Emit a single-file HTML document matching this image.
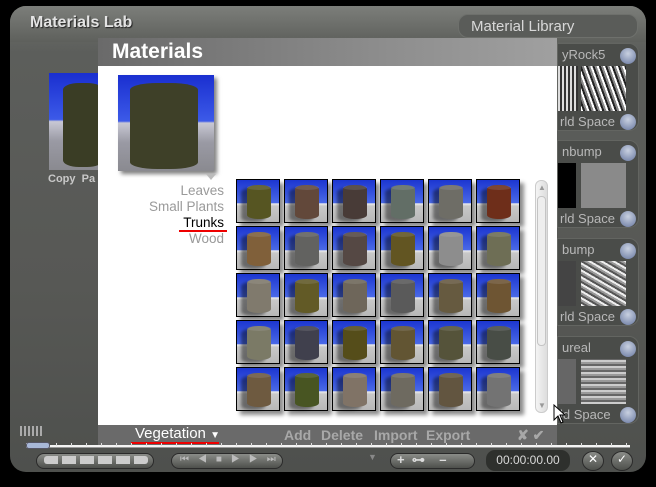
<!DOCTYPE html>
<html><head><meta charset="utf-8"><style>
*{margin:0;padding:0;box-sizing:border-box}
body{width:656px;height:487px;background:#000;position:relative;overflow:hidden;font-family:"Liberation Sans",sans-serif}
.abs{position:absolute}
#frame{left:10px;top:6px;width:636px;height:466px;border-radius:16px;background:linear-gradient(180deg,#6e706c 0%,#5c5e5b 10%,#575855 60%,#4e504d 100%)}
#titlebar{left:10px;top:6px;width:636px;height:36px;border-radius:16px 16px 0 0;background:linear-gradient(180deg,#7c7e7a,#5e605c)}
.t1{left:30px;top:14px;color:#e4e4e4;font-weight:bold;font-size:16px;text-shadow:1px 1px 1px #222}
#lib{left:458px;top:14px;width:180px;height:24px;border-radius:10px;background:#5a5c59;border:1px solid #6e706c;color:#d8d8d8;font-size:15px;padding:3px 0 0 12px}
.prev{background:linear-gradient(180deg,#1a2fd0 0%,#3c5ae8 48%,#c8c8d4 50%,#9a9aa4 70%,#8a8a90 100%)}
.cyl{position:absolute;border-radius:40%/8%}
#dlg{left:98px;top:38px;width:459px;height:407px;background:#fff}
#dhead{left:98px;top:38px;width:459px;height:28px;background:linear-gradient(90deg,#6a6a6a,#8c8c8c 60%,#a0a0a0)}
#dhead span{position:absolute;left:14px;top:2px;color:#fff;font-weight:bold;font-size:21px}
#dfoot{left:98px;top:425px;width:459px;height:20px;background:#6a6a6a}
.ft{color:#a8a8a8;font-weight:bold;font-size:14px;top:427px}
.cat{right:432px;font-size:13.5px;color:#9a9a9a;text-align:right}
.tile{position:absolute;width:44px;height:44px;border:1px solid #000;background:linear-gradient(180deg,#1c36d0 0%,#4a6ae8 55%,#f0f0f0 56%,#c8c8c8 62%,#b8b8b8 100%);box-shadow:4px 4px 4px rgba(0,0,0,.45)}
.tile i{position:absolute;left:10px;top:5px;width:24px;height:34px;border-radius:45%/12%;box-shadow:-6px 3px 3px rgba(0,0,0,.45);filter:brightness(.8)}
.tile i:after{content:"";position:absolute;left:0;top:0;right:0;height:5px;border-radius:50%;background:rgba(255,255,255,.15)}
.rp{left:557px;width:82px;height:88px;border-radius:0 10px 10px 0;background:#4a4c49;border:1px solid #636561}
.rp b{position:absolute;font-weight:normal;color:#b8b8b8;font-size:13px}
.knob{position:absolute;width:16px;height:16px;border-radius:50%;background:radial-gradient(circle at 50% 35%,#c8d0e0,#6878a0);left:62px}
.sw{position:absolute;left:23px;top:22px;width:45px;height:45px}
.btn{border-radius:9px;background:linear-gradient(180deg,#8a8c88,#4e504c);height:16px;top:453px;border:1px solid #2a2a2a}
</style></head><body>
<div id="frame" class="abs"></div>
<div id="titlebar" class="abs"></div>
<div class="abs t1">Materials Lab</div>
<div id="lib" class="abs">Material Library</div>

<div class="abs prev" style="left:49px;top:73px;width:52px;height:97px"><div class="cyl" style="left:14px;top:10px;width:40px;height:84px;background:#3a3d25"></div></div>
<div class="abs" style="left:48px;top:173px;color:#c8c8c8;font-size:11px;font-weight:bold">Copy&nbsp; Pa</div>
<div class="abs" style="left:20px;top:426px;width:22px;height:10px;background:repeating-linear-gradient(90deg,#aaa 0 2px,transparent 2px 4px)"></div>

<div class="abs rp" style="top:43px"><b style="left:4px;top:3px">yRock5</b><div class="knob" style="top:4px"></div><div class="sw" style="background:repeating-linear-gradient(70deg,#fff 0 2px,#222 2px 4px,#888 4px 6px)"></div><div class="abs" style="left:0;top:22px;width:20px;height:45px;background:repeating-linear-gradient(90deg,#ddd 0 2px,#333 2px 4px)"></div><b style="left:2px;top:70px">rld Space</b><div class="knob" style="top:70px"></div></div>
<div class="abs rp" style="top:140px"><b style="left:4px;top:3px">nbump</b><div class="knob" style="top:4px"></div><div class="sw" style="background:#8a8a8a"></div><div class="abs" style="left:0;top:22px;width:18px;height:45px;background:#000"></div><b style="left:2px;top:70px">rld Space</b><div class="knob" style="top:70px"></div></div>
<div class="abs rp" style="top:238px"><b style="left:4px;top:3px">bump</b><div class="knob" style="top:4px"></div><div class="sw" style="background:repeating-linear-gradient(30deg,#eee 0 2px,#555 2px 4px,#999 4px 6px)"></div><div class="abs" style="left:0;top:22px;width:18px;height:45px;background:#444"></div><b style="left:2px;top:70px">rld Space</b><div class="knob" style="top:70px"></div></div>
<div class="abs rp" style="top:336px"><b style="left:4px;top:3px">ureal</b><div class="knob" style="top:4px"></div><div class="sw" style="background:repeating-linear-gradient(0deg,#ccc 0 2px,#666 2px 4px,#999 4px 6px)"></div><div class="abs" style="left:0;top:22px;width:18px;height:45px;background:#666"></div><b style="left:2px;top:70px">ld Space</b><div class="knob" style="top:70px"></div></div>

<div id="dlg" class="abs"></div>
<div id="dhead" class="abs"><span>Materials</span></div>
<div class="abs prev" style="left:118px;top:75px;width:96px;height:96px;box-shadow:3px 3px 4px rgba(0,0,0,.5)"><div class="cyl" style="left:12px;top:8px;width:68px;height:86px;background:#3e4028"></div></div>
<div class="abs" style="left:206px;top:174px;width:0;height:0;border-left:5px solid transparent;border-right:5px solid transparent;border-top:6px solid #bbb"></div>
<div class="abs cat" style="top:183px">Leaves</div>
<div class="abs cat" style="top:199px">Small Plants</div>
<div class="abs cat" style="top:215px;color:#000">Trunks</div>
<div class="abs" style="left:179px;top:230px;width:48px;height:2px;background:#e00"></div>
<div class="abs cat" style="top:231px">Wood</div>

<div class="tile" style="left:236px;top:179px"><i style="background:#6b6a2a"></i></div>
<div class="tile" style="left:284px;top:179px"><i style="background:#7a5a48"></i></div>
<div class="tile" style="left:332px;top:179px"><i style="background:#5a4a45"></i></div>
<div class="tile" style="left:380px;top:179px"><i style="background:#7a8a80"></i></div>
<div class="tile" style="left:428px;top:179px"><i style="background:#8a8880"></i></div>
<div class="tile" style="left:476px;top:179px"><i style="background:#8a3a20"></i></div>
<div class="tile" style="left:236px;top:226px"><i style="background:#a07848"></i></div>
<div class="tile" style="left:284px;top:226px"><i style="background:#7a7a78"></i></div>
<div class="tile" style="left:332px;top:226px"><i style="background:#6a5a55"></i></div>
<div class="tile" style="left:380px;top:226px"><i style="background:#7a6a2a"></i></div>
<div class="tile" style="left:428px;top:226px"><i style="background:#b0b0b0"></i></div>
<div class="tile" style="left:476px;top:226px"><i style="background:#8a8a6a"></i></div>
<div class="tile" style="left:236px;top:273px"><i style="background:#a09888"></i></div>
<div class="tile" style="left:284px;top:273px"><i style="background:#7a7030"></i></div>
<div class="tile" style="left:332px;top:273px"><i style="background:#8a8070"></i></div>
<div class="tile" style="left:380px;top:273px"><i style="background:#707070"></i></div>
<div class="tile" style="left:428px;top:273px"><i style="background:#807050"></i></div>
<div class="tile" style="left:476px;top:273px"><i style="background:#8a6a40"></i></div>
<div class="tile" style="left:236px;top:320px"><i style="background:#9a9880"></i></div>
<div class="tile" style="left:284px;top:320px"><i style="background:#505060"></i></div>
<div class="tile" style="left:332px;top:320px"><i style="background:#6a6020"></i></div>
<div class="tile" style="left:380px;top:320px"><i style="background:#7a6a40"></i></div>
<div class="tile" style="left:428px;top:320px"><i style="background:#6a6848"></i></div>
<div class="tile" style="left:476px;top:320px"><i style="background:#5a6058"></i></div>
<div class="tile" style="left:236px;top:367px"><i style="background:#8a7050"></i></div>
<div class="tile" style="left:284px;top:367px"><i style="background:#5a6a2a"></i></div>
<div class="tile" style="left:332px;top:367px"><i style="background:#a09080"></i></div>
<div class="tile" style="left:380px;top:367px"><i style="background:#8a8478"></i></div>
<div class="tile" style="left:428px;top:367px"><i style="background:#7a6a50"></i></div>
<div class="tile" style="left:476px;top:367px"><i style="background:#909090"></i></div>

<div class="abs" style="left:535px;top:180px;width:13px;height:233px;border:1px solid #ccc;border-radius:6px;background:linear-gradient(90deg,#f4f4f4,#ddd)"></div>
<div class="abs" style="left:537px;top:196px;width:9px;height:150px;border:1px solid #c4c4c4;border-radius:4px;background:#eee"></div>
<div class="abs" style="left:538px;top:183px;font-size:8px;color:#999">▲</div>
<div class="abs" style="left:538px;top:401px;font-size:8px;color:#999">▼</div>

<div id="dfoot" class="abs"></div>
<div class="abs" style="left:135px;top:425px;color:#fff;font-size:15px">Vegetation <span style="font-size:10px">▼</span></div>
<div class="abs" style="left:131px;top:442px;width:88px;height:2px;background:#e00"></div>
<div class="abs ft" style="left:284px">Add</div>
<div class="abs ft" style="left:321px">Delete</div>
<div class="abs ft" style="left:374px">Import</div>
<div class="abs ft" style="left:426px">Export</div>
<div class="abs ft" style="left:517px">✘ ✔</div>

<svg class="abs" style="left:553px;top:404px" width="12" height="20"><path d="M1 1 L1 16 L5 12 L8 19 L10 18 L7 11 L12 11 Z" fill="#fff" stroke="#000"/></svg>

<div class="abs" style="left:26px;top:445px;width:604px;height:3px;background:#f4f4f4;border-bottom:1px solid #999"></div>
<div class="abs" style="left:26px;top:443px;width:604px;height:3px;background:repeating-linear-gradient(90deg,#ddd 0 1px,transparent 1px 15px)"></div>
<div class="abs" style="left:26px;top:442px;width:24px;height:7px;background:#a8b8d8;border:1px solid #556;border-radius:3px"></div>
<div class="abs btn" style="left:36px;width:118px"></div>
<div class="abs" style="left:44px;top:456px;width:104px;height:8px;background:repeating-linear-gradient(90deg,#ccc 0 14px,transparent 14px 18px);border-radius:3px"></div>
<div class="abs btn" style="left:171px;width:112px"></div>
<div class="abs" style="left:180px;top:454px;font-size:10px;color:#bbb;letter-spacing:9px">⏮◀■▶▶⏭</div>
<div class="abs" style="left:368px;top:452px;font-size:9px;color:#888">▼</div>
<div class="abs btn" style="left:390px;width:85px"></div>
<div class="abs" style="left:397px;top:452px;font-size:13px;color:#ddd;font-weight:bold">+ &nbsp;⊶ &nbsp;&nbsp;&nbsp;–</div>
<div class="abs" style="left:486px;top:450px;width:84px;height:21px;border-radius:9px;background:#2e302d;color:#d8d8d8;font-size:12px;text-align:center;padding-top:3px">00:00:00.00</div>
<div class="abs btn" style="left:582px;top:451px;width:22px;height:20px;border-radius:50%;color:#fff;font-size:12px;text-align:center">✕</div>
<div class="abs btn" style="left:611px;top:451px;width:22px;height:20px;border-radius:50%;color:#fff;font-size:12px;text-align:center">✓</div>
</body></html>
